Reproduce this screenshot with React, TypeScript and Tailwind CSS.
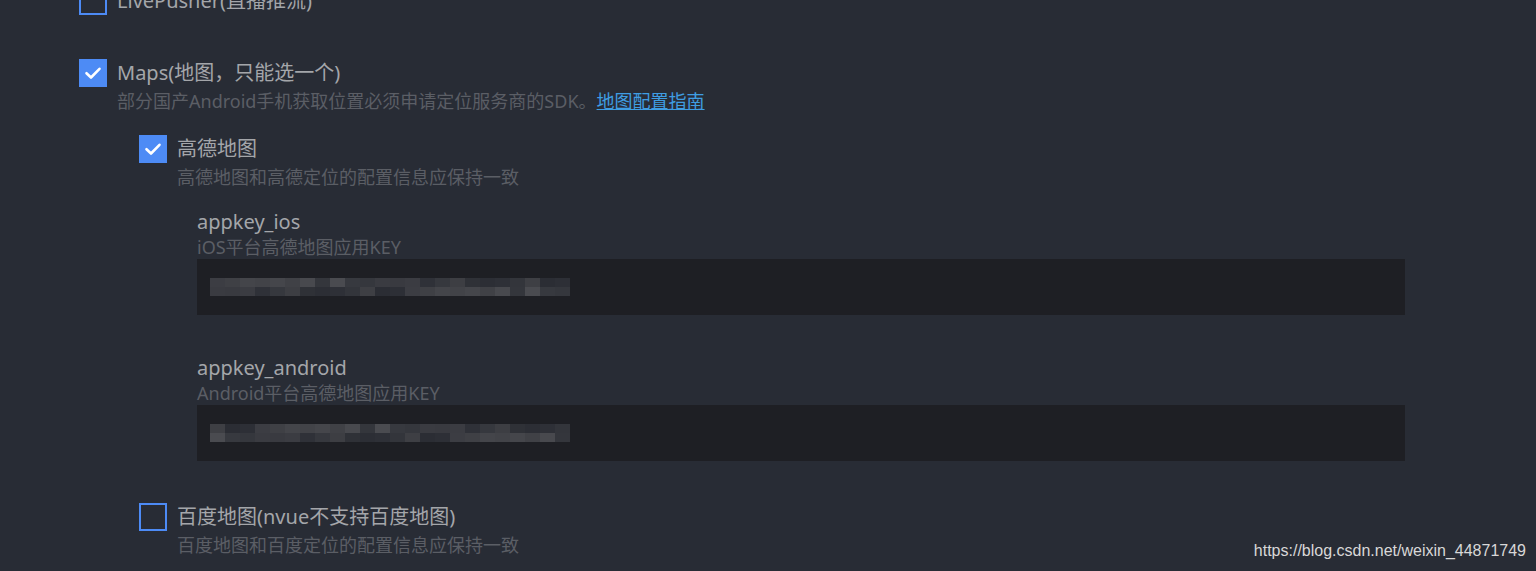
import React from "react";

const font = { fontFamily: '"Noto Sans", "Noto Sans CJK SC", sans-serif' };

function CheckBox({ checked }: { checked?: boolean }) {
  if (checked) {
    return (
      <div className="w-[28px] h-[28px] shrink-0 bg-[#4d8bf5] flex items-center justify-center">
        <svg width="18" height="14" viewBox="0 0 18 14" fill="none">
          <path d="M2.5 7.2 L7 11.5 L15.5 2.8" stroke="#ffffff" strokeWidth="2.6" strokeLinecap="round" strokeLinejoin="round" />
        </svg>
      </div>
    );
  }
  return <div className="w-[28px] h-[28px] shrink-0 border-2 border-[#4d8bf5]" />;
}

function Option({
  checked,
  title,
  desc,
  children,
}: {
  checked?: boolean;
  title: string;
  desc?: React.ReactNode;
  children?: React.ReactNode;
}) {
  return (
    <div className="flex flex-col">
      <div className="flex items-start gap-[10px]">
        <CheckBox checked={checked} />
        <div className="flex flex-col">
          <div className="text-[20px] leading-[28px] text-[#a4a6aa]">{title}</div>
          {desc && <div className="text-[18px] leading-[28px] text-[#5b5e65]">{desc}</div>}
        </div>
      </div>
      {children}
    </div>
  );
}

// pixelated / blurred key value
const shades = [
  "#3c3d43", "#34363c", "#2f3138", "#3e3f44", "#45464b", "#3a3b41", "#2c2e35", "#3f4045",
  "#4a4b50", "#36383e", "#2b2d34", "#404146", "#393a40", "#2e3037", "#44454a", "#37393f",
  "#3d3e43", "#2d2f36", "#48494e", "#3b3c42", "#33353b", "#424348", "#35373d", "#2f3137",
];

function Mosaic({ seed }: { seed: number }) {
  const rows = [0, 1];
  return (
    <div className="flex flex-col">
      {rows.map((r) => (
        <div key={r} className="flex">
          {shades.map((_, i) => (
            <div
              key={i}
              className="w-[15px] h-[9px]"
              style={{ backgroundColor: shades[(i * 7 + r * 5 + seed) % shades.length] }}
            />
          ))}
        </div>
      ))}
    </div>
  );
}

function Field({ name, desc, seed }: { name: string; desc: string; seed: number }) {
  return (
    <div className="flex flex-col ml-[20px]">
      <div className="text-[20px] leading-[27px] text-[#a4a6aa]">{name}</div>
      <div className="text-[18px] leading-[24px] text-[#5b5e65]">{desc}</div>
      <div className="w-[1208px] h-[56px] bg-[#1e1f24] flex items-center pl-[13px]">
        <Mosaic seed={seed} />
      </div>
    </div>
  );
}

export default function App() {
  return (
    <div className="relative w-[1536px] h-[571px] overflow-hidden bg-[#282c35]" style={font}>
      <div className="flex flex-col pl-[79px] -mt-[13px]">
        <div className="mb-[44px]">
          <Option title="LivePusher(直播推流)" />
        </div>
        <Option
          checked
          title="Maps(地图，只能选一个)"
          desc={
            <>
              部分国产Android手机获取位置必须申请定位服务商的SDK。
              <span className="text-[#3f9de2] underline">地图配置指南</span>
            </>
          }
        >
          <div className="flex flex-col ml-[60px] mt-[20px] gap-[42px]">
            <Option checked title="高德地图" desc="高德地图和高德定位的配置信息应保持一致">
              <div className="flex flex-col ml-[38px] mt-[17px] gap-[39px]">
                <Field name="appkey_ios" desc="iOS平台高德地图应用KEY" seed={0} />
                <Field name="appkey_android" desc="Android平台高德地图应用KEY" seed={3} />
              </div>
            </Option>
            <Option title="百度地图(nvue不支持百度地图)" desc="百度地图和百度定位的配置信息应保持一致" />
          </div>
        </Option>
      </div>
      <div
        className="absolute right-[10px] bottom-[9px] text-[16px] leading-[22px] text-[#d8d8d8]"
        style={{ fontFamily: '"Liberation Sans", Arial, sans-serif' }}
      >
        https://blog.csdn.net/weixin_44871749
      </div>
    </div>
  );
}
